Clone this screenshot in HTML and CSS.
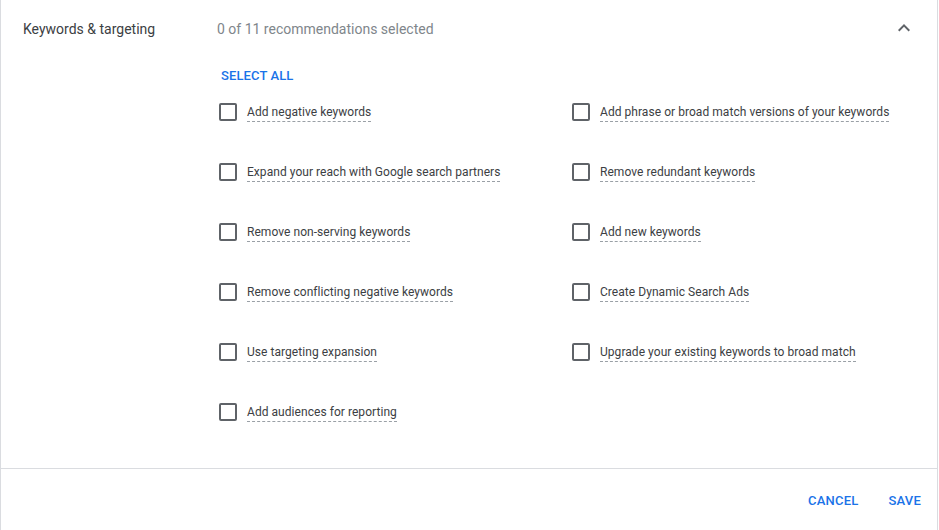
FILE: index.html
```html
<!DOCTYPE html>
<html lang="en">
<head>
<meta charset="utf-8">
<title>Keywords &amp; targeting</title>
<link rel="stylesheet" href="styles.css">
</head>
<body>
<div class="panel">
  <div class="header">
    <div class="title">Keywords &amp; targeting</div>
    <div class="summary">0 of 11 recommendations selected</div>
    <svg class="chevron" width="24" height="24" viewBox="0 0 24 24"><path d="M12 8l-6 6 1.41 1.41L12 10.83l4.59 4.58L18 14z" fill="#5f6368"/></svg>
  </div>
  <div class="body">
    <div class="select-all">SELECT ALL</div>
    <div class="grid">
      <label class="item"><span class="box"></span><span class="text">Add negative keywords</span></label>
      <label class="item"><span class="box"></span><span class="text">Add phrase or broad match versions of your keywords</span></label>
      <label class="item"><span class="box"></span><span class="text">Expand your reach with Google search partners</span></label>
      <label class="item"><span class="box"></span><span class="text">Remove redundant keywords</span></label>
      <label class="item"><span class="box"></span><span class="text">Remove non-serving keywords</span></label>
      <label class="item"><span class="box"></span><span class="text">Add new keywords</span></label>
      <label class="item"><span class="box"></span><span class="text">Remove conflicting negative keywords</span></label>
      <label class="item"><span class="box"></span><span class="text">Create Dynamic Search Ads</span></label>
      <label class="item"><span class="box"></span><span class="text">Use targeting expansion</span></label>
      <label class="item"><span class="box"></span><span class="text">Upgrade your existing keywords to broad match</span></label>
      <label class="item"><span class="box"></span><span class="text">Add audiences for reporting</span></label>
    </div>
  </div>
  <div class="footer">
    <button class="btn">CANCEL</button>
    <button class="btn">SAVE</button>
  </div>
</div>
</body>
</html>
```

FILE: styles.css
```css
html, body {
  margin: 0;
  padding: 0;
  background: #fff;
}
body {
  font-family: Roboto, "Noto Sans", Arial, sans-serif;
  color: #3c4043;
}
.panel {
  width: 936px;
  height: 530px;
  border-left: 1px solid #dadce0;
  border-right: 1px solid #dadce0;
  display: flex;
  flex-direction: column;
}
.header {
  height: 58px;
  display: flex;
  align-items: center;
  padding-left: 22px;
  padding-right: 21px;
}
.title {
  width: 194px;
  font-size: 14px;
  color: #3c4043;
}
.summary {
  flex: 1;
  font-size: 14px;
  color: #80868b;
}
.chevron {
  display: block;
  margin-top: -2px;
}
.body {
  padding-left: 218px;
  padding-top: 8px;
  padding-bottom: 44px;
  border-bottom: 1px solid #dadce0;
}
.select-all {
  height: 20px;
  line-height: 20px;
  font-size: 13px;
  font-weight: 500;
  color: #1a73e8;
  letter-spacing: 0.1px;
  padding-left: 2px;
  margin-bottom: 14px;
}
.grid {
  display: grid;
  grid-template-columns: 353px 1fr;
  grid-auto-rows: 24px;
  row-gap: 36px;
}
.item {
  display: flex;
  align-items: center;
  gap: 10px;
}
.box {
  width: 14px;
  height: 14px;
  border: 2px solid #5f6368;
  border-radius: 2px;
  flex: none;
}
.text {
  font-size: 12px;
  line-height: 15px;
  letter-spacing: 0.05px;
  color: #3c4043;
  border-bottom: 1px dashed #9aa0a6;
  padding-bottom: 1px;
  margin-top: 2px;
}
.footer {
  flex: 1;
  display: flex;
  justify-content: flex-end;
  align-items: center;
  padding-right: 8px;
  gap: 14px;
}
.btn {
  border: none;
  background: none;
  font-family: Roboto, "Noto Sans", Arial, sans-serif;
  font-size: 13px;
  font-weight: 500;
  color: #1a73e8;
  padding: 8px;
  letter-spacing: 0.2px;
  margin-top: 1px;
}
```
